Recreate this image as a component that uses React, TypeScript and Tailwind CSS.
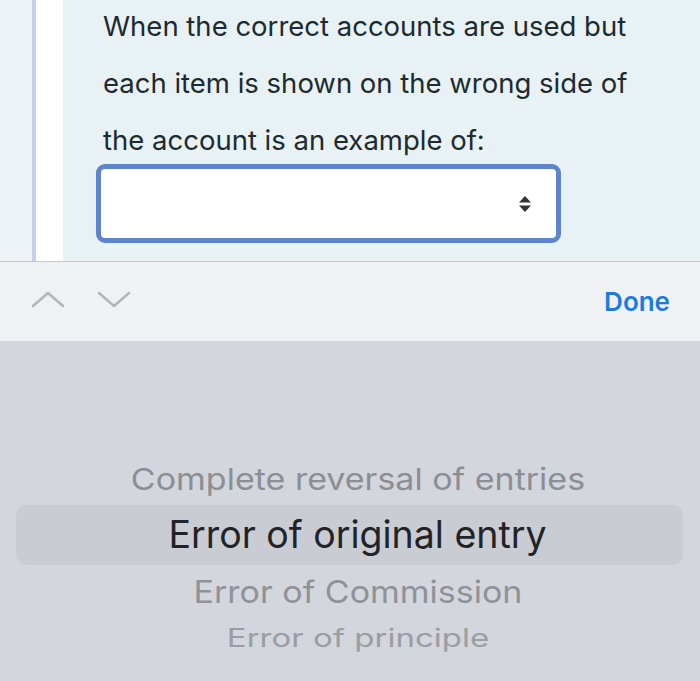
import React from "react";

const options = [
  { label: "Complete reversal of entries", cls: "text-[34px] text-[#8b8e93] h-[52px] scale-y-[0.88]" },
  { label: "Error of original entry", cls: "text-[37.5px] text-[#222326] h-[60px]" },
  { label: "Error of Commission", cls: "text-[34px] text-[#8f9297] h-[52px] scale-y-[0.92]" },
  { label: "Error of principle", cls: "text-[33px] text-[#9a9da2] h-[44px] scale-y-[0.76]" },
];

export default function App() {
  return (
    <div className="w-[700px] h-[681px] overflow-hidden flex flex-col bg-[#d3d6dc]">
      {/* question area */}
      <div className="h-[262px] flex shrink-0 border-b border-[#c6c7cb]">
        <div className="w-[32px] bg-[#eef3f8]" />
        <div className="w-[4px] bg-[#c6cef0]" />
        <div className="w-[27px] bg-white" />
        <div className="flex-1 bg-[#e8f1f4] pl-[40px] pt-0 font-['Inter',sans-serif]">
          <p className="text-[27.5px] leading-[57px] text-[#1d2a30] w-[550px] -mt-[2px]">
            When the correct accounts are used but each item is shown on the wrong side of the account is an example of:
          </p>
          <div className="mt-[-5px] -ml-[7px] w-[465px] h-[79px] rounded-[9px] border-[5px] border-[#5d84cc] bg-white flex items-center justify-end pr-[24px]">
            <svg width="14" height="20" viewBox="0 0 14 20">
              <path d="M7 2 L13 8.5 H1 Z" fill="#333" />
              <path d="M7 18 L13 11.5 H1 Z" fill="#333" />
            </svg>
          </div>
        </div>
      </div>

      {/* toolbar */}
      <div className="h-[79px] shrink-0 bg-[#f0f1f3] flex items-center px-[30px] font-['Inter',sans-serif]">
        <svg width="36" height="20" viewBox="0 0 36 20" className="mt-[-4px]">
          <path d="M3 16 L18 3 L33 16" fill="none" stroke="#b4b5b8" strokeWidth="2.5" strokeLinecap="round" strokeLinejoin="round" />
        </svg>
        <svg width="36" height="20" viewBox="0 0 36 20" className="ml-[30px] mt-[-4px]">
          <path d="M3 3 L18 16 L33 3" fill="none" stroke="#b4b5b8" strokeWidth="2.5" strokeLinecap="round" strokeLinejoin="round" />
        </svg>
        <span className="ml-auto text-[26px] font-semibold text-[#1a7ce2]">Done</span>
      </div>

      {/* picker */}
      <div className="flex-1 px-[16px] pt-[112px] font-['Inter',sans-serif]">
        {options.map((o, i) => (
          <div
            key={o.label}
            className={`flex items-center justify-center pl-[16px] ${i === 1 ? "bg-[#c9ccd3] rounded-[11px] mr-[1px]" : ""}`}
          >
            <span className={`flex items-center ${o.cls}`}>{o.label}</span>
          </div>
        ))}
      </div>
    </div>
  );
}
